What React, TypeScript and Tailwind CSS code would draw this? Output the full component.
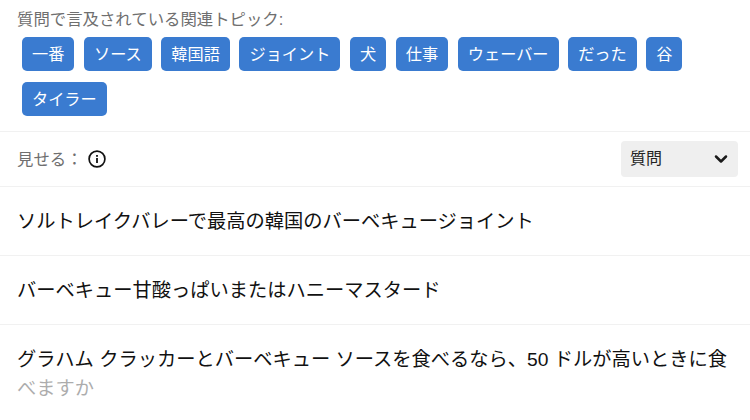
import React from "react";
import { ChevronDown } from "lucide-react";

const font = "font-['Liberation_Sans','Noto_Sans_CJK_JP',sans-serif]";

const topics = ["一番", "ソース", "韓国語", "ジョイント", "犬", "仕事", "ウェーバー", "だった", "谷", "タイラー"];

const questions = [
  "ソルトレイクバレーで最高の韓国のバーベキュージョイント",
  "バーベキュー甘酸っぱいまたはハニーマスタード",
];

function InfoIcon() {
  return (
    <svg width="18" height="18" viewBox="0 0 18 18" fill="none">
      <circle cx="9" cy="9" r="7.9" stroke="#111" strokeWidth="1.7" />
      <rect x="8.1" y="8" width="1.8" height="5" fill="#111" />
      <rect x="8.1" y="5" width="1.8" height="1.8" fill="#111" />
    </svg>
  );
}

export default function App() {
  return (
    <div className={`w-[750px] h-[420px] overflow-hidden bg-white ${font}`}>
      <div className="h-[132px] border-b border-[#f1f1f1] pt-[10px]">
        <div className="pl-[17px] text-[16.4px] leading-[19px] text-[#6f6f6f]">質問で言及されている関連トピック:</div>
        <div className="mt-[8px] flex flex-wrap gap-x-[9.6px] gap-y-[11px] pl-[22px] pr-[40px]">
          {topics.map((t) => (
            <span key={t} className="flex h-[34px] items-center rounded-[5px] bg-[#3a7bd0] px-[10px] text-[16.2px] text-white">
              {t}
            </span>
          ))}
        </div>
      </div>

      <div className="flex h-[55px] items-center justify-between border-b border-[#f1f1f1] pl-[17px] pr-[12px]">
        <div className="flex items-center gap-[6px]">
          <span className="text-[16.4px] text-[#6f6f6f]">見せる：</span>
          <span className="-ml-[1px]"><InfoIcon /></span>
        </div>
        <div className="flex h-[36px] w-[117px] items-center justify-between rounded-[4px] bg-[#efefef] pl-[9px] pr-[7px] text-[16px] text-[#222]">
          質問
          <ChevronDown size={20} strokeWidth={3} className="text-[#1a1a1a]" />
        </div>
      </div>

      {questions.map((q) => (
        <div key={q} className="flex h-[69px] items-center border-b border-[#f1f1f1] pl-[17px] pt-[2px] text-[19.25px] text-[#111]">
          {q}
        </div>
      ))}

      <div className="relative pl-[17px] pr-[20px] pt-[20px] text-[19.25px] leading-[29px] text-[#111]">
        グラハム クラッカーとバーベキュー ソースを食べるなら、50 ドルが高いときに食べますか
        <div className="absolute inset-x-0 top-[48px] h-[40px] bg-white/65" />
      </div>
    </div>
  );
}
